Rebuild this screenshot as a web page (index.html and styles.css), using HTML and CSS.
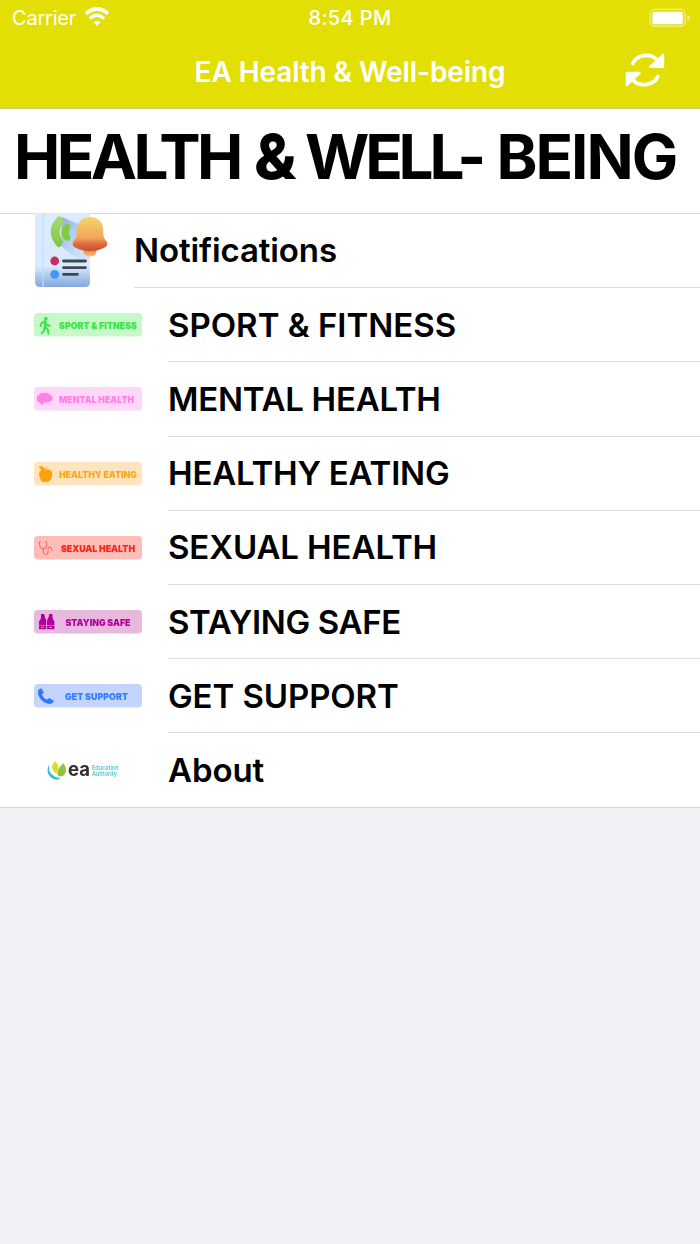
FILE: index.html
```html
<!DOCTYPE html>
<html lang="en">
<head>
<meta charset="utf-8">
<title>EA Health &amp; Well-being</title>
<link rel="stylesheet" href="styles.css">
</head>
<body>
<header class="top">
  <div class="status">
    <div class="carrier"><span>Carrier</span>
      <svg width="26" height="20" viewBox="0 0 26 20" fill="none" stroke="#fff"><path d="M1.900 6.700Q13-2.600 24.100 6.700" stroke-width="3.900"/><path d="M5.800 11.600Q13 4.800 20.200 11.600" stroke-width="3.200"/><path d="M9.500 15.300Q13 12.300 16.500 15.300L13 19Z" fill="#fff" stroke="none"/></svg>
    </div>
    <div class="time">8:54 PM</div>
    <div class="battery">
      <svg width="42" height="20" viewBox="0 0 42 20"><rect x="1.200" y="1.200" width="34.800" height="17.100" rx="4.500" fill="none" stroke="#fff" stroke-opacity=".45" stroke-width="1.500"/><rect x="3.400" y="3.800" width="30.400" height="12.400" rx="2" fill="#fff"/><path d="M38.500 6.500q2 1 2 3.300t-2 3.300z" fill="#fff" fill-opacity=".55"/></svg>
    </div>
  </div>
  <div class="nav">
    <span></span>
    <h1 class="nav-title">EA Health &amp; Well-being</h1>
    <svg class="refresh" width="40" height="36" viewBox="0 0 40 36"><g fill="none" stroke="#fff" stroke-width="3.700" stroke-linecap="round"><path d="M7.700 10.500C11.500 1.500 25.500 -.5 32 7"/><path d="M32.800 23.500C29 32.500 14.500 34.500 8 27"/></g><path d="M39.200 2V14q0 1-1 1H25.500q-2.500-.8-1-2.600L28 10 37.500 .8q1.500-.8 1.700 1.200zM.700 32V20q0-1.300 1.200-1.300H14.300q2.500.8 1 2.600L12 24 2.400 33q-1.500.8-1.700-1z" fill="#fff"/></svg>
  </div>
</header>
<section class="heading"><h2 class="heading-text"><span class="word-health">HEALTH</span> <span class="word-and">&amp;</span> <span class="word-well">WELL-</span> <span class="word-being">BEING</span></h2></section>
<main class="list">
  <div class="row row-note">
    <svg class="note-icon" width="74" height="75" viewBox="0 0 74 75">
      <defs>
        <linearGradient id="book" x2="0" y2="1"><stop stop-color="#dcecff"/><stop offset=".72" stop-color="#d8eafe"/><stop offset="1" stop-color="#83a7dc"/></linearGradient>
        <linearGradient id="bell" x2="0" y2="1"><stop stop-color="#f7d468"/><stop offset=".62" stop-color="#efa65a"/><stop offset=".8" stop-color="#df693d"/><stop offset="1" stop-color="#c84b35"/></linearGradient>
        <linearGradient id="phone" x2="0" y2="1"><stop stop-color="#a9da78"/><stop offset="1" stop-color="#7cc83b"/></linearGradient>
        <linearGradient id="shade" x2="1" y2="1"><stop stop-color="#8facdf"/><stop offset="1" stop-color="#d5e6fc" stop-opacity=".5"/></linearGradient>
        <linearGradient id="clapper" x2="0" y2="1"><stop stop-color="#e9773f"/><stop offset="1" stop-color="#ffc565"/></linearGradient>
      </defs>
      <path d="M1 0h54l1 2v67q0 5-5 5H6q-5 0-5-5z" fill="url(#book)"/>
      <path d="M8 0h2v74H8z" fill="#bfdcff" opacity=".55"/>
      <path d="M28 4l28 12v30H43L27 33z" fill="url(#shade)"/>
      <path d="M23.500 4q2-1.500 4 .3l1.800 3q.8 1.700-1 3.700-5 8-.2 16.500 1.500 2.200.3 3.500l-2 2.500q-1.500 1.500-3 .2Q9.800 18 23.500 4z" fill="url(#phone)"/>
      <path d="M32 11q2-1.200 3.800.5l1 2.500q-4.300 5.500 0 10.500l-1.800 3q-2 1-3.800-.5-8.500-7.800.8-16z" fill="#7fca43"/>
      <path d="M49.300 36q0 7.500 6.700 7.500t6.700-7.500z" fill="url(#clapper)"/>
      <path d="M56 4c8.500 0 13.300 6 13.200 13.500-.1 6 .8 8 3.100 10.500 2 2.500.9 5.500-2.300 6.800-8 4.300-20 4.300-28 0-3.200-1.300-4.300-4.300-2.300-6.800 2.300-2.500 3.200-4.500 3.100-10.500C42.700 10 47.500 4 56 4z" fill="url(#bell)"/>
      <circle cx="20.700" cy="48" r="4.400" fill="#cc2c62"/><circle cx="20.700" cy="61.300" r="4.400" fill="#4496ff"/>
      <path d="M29.500 48h22M29.500 54.600h22M29.500 61.300h14" stroke="#41454e" stroke-width="2.800" stroke-linecap="round"/>
    </svg>
    <div class="label label-note"><span class="w-note">Notifications</span></div>
  </div>
  <div class="row">
    <svg class="badge" width="108" height="24" viewBox="0 0 108 24"><rect width="108" height="23.500" rx="4" fill="#c8f8c8"/><g fill="none" stroke="#3fe455" stroke-width="2" stroke-linecap="round" stroke-linejoin="round"><path d="M11 8L7.500 10.200 6.500 13M11 8l1.500 3.500 3.200 1.300M11 9v5l3 2.700.3 4M10.500 14.500L9.800 18 7.700 20.300"/><path d="M11.200 9.500v4.500" stroke-width="3"/></g><circle cx="11.800" cy="5.700" r="1.900" fill="#3fe455"/><text class="badge-text" x="25" y="15.800" textLength="78" lengthAdjust="spacingAndGlyphs" fill="#35e64a">SPORT &amp; FITNESS</text></svg>
    <div class="label"><span class="w-sport">SPORT &amp; FITNESS</span></div>
  </div>
  <div class="row">
    <svg class="badge" width="108" height="24" viewBox="0 0 108 24"><rect width="108" height="23.500" rx="4" fill="#ffd8f8"/><path d="M3 12q-1-3 2-4 2-3 5-2 3-1 5 1 3 1 3.500 4 1 3-2.500 3.500-2 1.500-6 1l-1.500 2.500-2-1-.5-1.500Q3 15.500 3 12z" fill="#ff80e8"/><path d="M5 11q2 1 3-1m2 3q3 1 4-2" stroke="#ff9bed" stroke-width=".7" fill="none"/><text class="badge-text" x="25" y="15.800" textLength="75" lengthAdjust="spacingAndGlyphs" fill="#ff7ee8">MENTAL HEALTH</text></svg>
    <div class="label"><span class="w-mental">MENTAL HEALTH</span></div>
  </div>
  <div class="row">
    <svg class="badge" width="108" height="24" viewBox="0 0 108 24"><rect width="108" height="23.500" rx="4" fill="#ffe5bd"/><path d="M11.500 8.500q3.500-2 5.500 0 2.500 3 .3 7.500Q15.500 20 13.500 20q-2-.7-4 0-2 0-3.500-4-2-4.500.3-7.300 2-2.200 5.200-.2z" fill="#ff9f0a"/><path d="M5.500 4.700q4-.5 5.300 3.200Q6.500 8 5.500 4.700zM11.500 8q0-2 1.800-3" fill="#ff9f0a" stroke="#ff9f0a"/><text class="badge-text" x="25" y="15.800" textLength="78" lengthAdjust="spacingAndGlyphs" fill="#ffa51f">HEALTHY EATING</text></svg>
    <div class="label"><span class="w-eating">HEALTHY EATING</span></div>
  </div>
  <div class="row">
    <svg class="badge" width="108" height="24" viewBox="0 0 108 24"><rect width="108" height="23.500" rx="4" fill="#ffbdb8"/><path d="M7 5.500l-1.500.5q-.5 7 4 7 4.300-1 3-7l-1.500-.5M9.500 13q-1 5.500 2.500 5.500 2.500-.5 2-4-.2-3.500 2-3.500 2 .5 2 4" fill="none" stroke="#ff6e68" stroke-width="1.100"/><text class="badge-text" x="27" y="15.800" textLength="74" lengthAdjust="spacingAndGlyphs" fill="#ff2319">SEXUAL HEALTH</text></svg>
    <div class="label"><span class="w-sexual">SEXUAL HEALTH</span></div>
  </div>
  <div class="row">
    <svg class="badge" width="108" height="24" viewBox="0 0 108 24"><rect width="108" height="23.500" rx="4" fill="#e8b9df"/><path d="M7 4h3.300l.7 3.500 1.300 2.500V15H5v-4q1.700-1 2-3.500zM18.500 4h-3.300l-.7 3.500-1.400 2.500V15h7.300v-4q-1.600-1-1.900-3.500zM5 15.600h7.200V19.300H5zm8.100 0h7.300V19.300h-7.300z" fill="#b3009c"/><path d="M7 17.400h3m5 0h3" stroke="#e8b9df" stroke-width=".8" fill="none"/><text class="badge-text" x="31.500" y="15.800" textLength="65" lengthAdjust="spacingAndGlyphs" fill="#b3009c">STAYING SAFE</text></svg>
    <div class="label"><span class="w-safe">STAYING SAFE</span></div>
  </div>
  <div class="row">
    <svg class="badge" width="108" height="24" viewBox="0 0 108 24"><rect width="108" height="23.500" rx="4" fill="#c3d5ff"/><path d="M5 5.200l2.300-1L10 8.700 7.800 10.500q1.200 3.500 5 5.300l2.500-1.700 4.700 3q-1.200 3-3.800 3-8-.8-11.500-8Q3.200 7.500 5 5.200z" fill="#2f77fa"/><text class="badge-text" x="31" y="15.800" textLength="63" lengthAdjust="spacingAndGlyphs" fill="#347eff">GET SUPPORT</text></svg>
    <div class="label"><span class="w-support">GET SUPPORT</span></div>
  </div>
  <div class="row">
    <svg class="badge" width="108" height="24" viewBox="0 0 108 24"><path d="M15.300 6q-1.300 7 2.700 10.500 3 3 8.500 3.500-4 3-8 .5Q10.500 15 15.300 6z" fill="#36bfd1"/><path d="M21 3.200q6 4.300 1.500 12.800-8-6-1.500-12.800z" fill="#d5df26"/><path d="M29.500 5.200q4.500 6.800 1 11.300-2.500 3-6.500 1.300-2-6.800 5.500-12.600z" fill="#8bc53f"/><text class="ea-text" x="34" y="18.200" textLength="22" lengthAdjust="spacingAndGlyphs">ea</text><g class="ea-small" fill="#49c7d4"><text x="58" y="11.500" textLength="26.500" lengthAdjust="spacingAndGlyphs">Education</text><text x="58" y="17.600" textLength="25" lengthAdjust="spacingAndGlyphs">Authority</text></g></svg>
    <div class="label label-last"><span class="w-about">About</span></div>
  </div>
</main>
</body>
</html>
```

FILE: styles.css
```css
* { box-sizing: border-box; }
body { margin: 0; background: #f2f1f6; color: #000; font-family: Inter, "Liberation Sans", sans-serif; }
h1, h2 { margin: 0; }
svg { display: block; flex: none; }
.top { height: 109px; background: #e3df04; color: #fff; border-bottom: 1px solid #d2cf70; }
.status { height: 36px; display: grid; grid-template-columns: 1fr auto 1fr; align-items: center; font-size: 20px; line-height: 36px; }
.carrier { display: flex; align-items: center; gap: 8px; padding-left: 12px; letter-spacing: -.2px; }
.carrier svg { margin-top: -2px; }
.time { font-weight: 500; letter-spacing: .35px; }
.battery { display: flex; justify-content: flex-end; padding-right: 9px; }
.nav { height: 72px; display: grid; grid-template-columns: 75px 1fr 75px; align-items: center; }
.nav-title { text-align: center; font-size: 28px; font-weight: 600; letter-spacing: -.1px; line-height: 70px; white-space: nowrap; }
.refresh { margin-top: -2px; }
.heading { height: 105px; padding: 0 0 8px 14px; display: flex; align-items: center; background: #fff; border-bottom: 1px solid #dadadc; }
.heading-text { font-size: 62px; font-weight: 700; letter-spacing: -3px; line-height: 80px; white-space: nowrap; }
.word-health { letter-spacing: -3.6px; margin-right: 2.5px; }
.word-and { font-weight: 800; }
.word-well { letter-spacing: -4.2px; margin-right: 2.7px; }
.word-being { letter-spacing: -2px; }
.list { height: 594px; padding-bottom: .5px; display: grid; grid-template-rows: repeat(8, 1fr); background: #fff; box-shadow: inset 0 -1px #d4d3d8; }
.row { min-height: 0; display: flex; align-items: stretch; padding-left: 34px; }
.note-icon { margin-top: -1px; }
.label { flex: 1; margin-left: 26px; display: flex; align-items: center; border-bottom: 1px solid #dedee0; font-size: 33px; font-weight: 600; white-space: nowrap; }
.label-note { letter-spacing: -.1px; padding-bottom: 1px; }
.label-last { border-bottom: 0; }
.w-mental { letter-spacing: -.25px; }
.w-eating { letter-spacing: -.2px; }
.w-sexual { letter-spacing: -.1px; }
.w-safe { letter-spacing: -.35px; }
.w-support { letter-spacing: -.1px; }
.w-about { letter-spacing: -.1px; }
.badge { align-self: center; filter: blur(.35px); }
.badge-text { font-size: 9.500px; font-weight: 900; }
.ea-text { font-size: 19px; font-weight: 700; fill: #30302f; }
.ea-small { font-size: 6px; font-weight: 600; }
```
